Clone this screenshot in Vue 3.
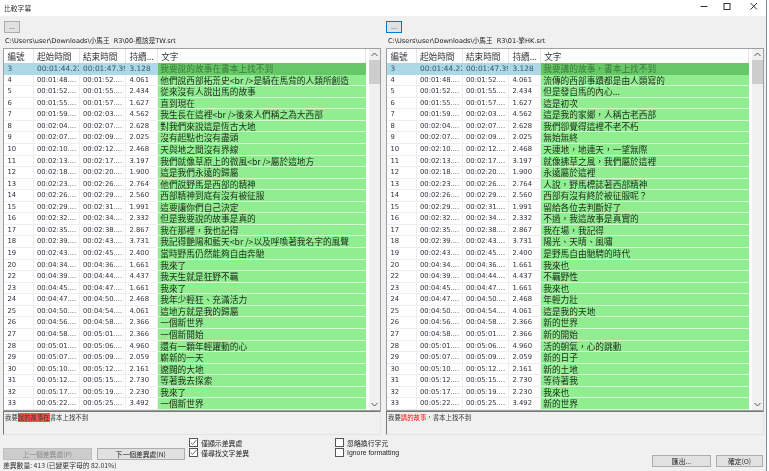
<template>
  <div class="window">
    <div class="titlebar">
      <span class="title">比較字幕</span>
      <div class="win-btns">
        <svg width="12" height="12" viewBox="0 0 12 12"><path d="M2.5 4.5h7" stroke="#333" fill="none" /></svg>
        <svg width="12" height="12" viewBox="0 0 12 12"><rect x="3" y="1.5" width="6" height="6" stroke="#333" fill="none" /></svg>
        <svg width="12" height="12" viewBox="0 0 12 12"><path d="M2.5 1l6.5 6.5M9 1L2.5 7.5" stroke="#333" fill="none" /></svg>
      </div>
    </div>

    <div class="panes">
      <div v-for="(pane, i) in panes" :key="i" class="pane">
        <button class="dots" :class="{ focused: i === 1 }">...</button>
        <div class="path">{{ pane.path }}</div>
        <div class="list">
          <div class="table">
            <div class="row head">
              <div class="c">編號</div>
              <div class="c">起始時間</div>
              <div class="c">結束時間</div>
              <div class="c">持續...</div>
              <div class="c">文字</div>
            </div>
            <div v-for="(r, n) in rows" :key="r[0]" class="row" :class="{ sel: n === 0 }">
              <div class="c">{{ r[0] }}</div>
              <div class="c">{{ r[1] }}</div>
              <div class="c">{{ r[2] }}</div>
              <div class="c">{{ r[3] }}</div>
              <div class="c txt">{{ pane.lines[n] }}</div>
            </div>
          </div>
          <div class="scroll">
            <svg class="arrow" width="7" height="5" viewBox="0 0 7 5"><path d="M.5 4l3-3 3 3" stroke="#555" fill="none" /></svg>
            <div class="thumb"></div>
            <svg class="arrow" width="7" height="5" viewBox="0 0 7 5"><path d="M.5 1l3 3 3-3" stroke="#555" fill="none" /></svg>
          </div>
        </div>
        <div class="diff-box">
          <span v-for="(s, k) in pane.diff" :key="k" :class="s.cls">{{ s.t }}</span>
        </div>
      </div>
    </div>

    <div class="footer">
      <div class="nav">
        <div class="nav-btns">
          <button class="btn wide" disabled>上一個差異處(P)</button>
          <button class="btn wide">下一個差異處(N)</button>
        </div>
        <div class="status">差異數量: 413 (已變更字母的 82.01%)</div>
      </div>
      <div class="checks">
        <label class="check"><span class="box">
          <svg width="7" height="7" viewBox="0 0 9 9"><path d="M1 4.5l2.5 2.5L8 1.5" stroke="#444" fill="none" /></svg>
        </span>僅顯示差異處</label>
        <label class="check"><span class="box">
          <svg width="7" height="7" viewBox="0 0 9 9"><path d="M1 4.5l2.5 2.5L8 1.5" stroke="#444" fill="none" /></svg>
        </span>僅尋找文字差異</label>
      </div>
      <div class="checks">
        <label class="check"><span class="box"></span>忽略換行字元</label>
        <label class="check latin"><span class="box"></span>Ignore formatting</label>
      </div>
      <div class="actions">
        <button class="btn export">匯出...</button>
        <button class="btn ok">確定(O)</button>
      </div>
    </div>
  </div>
</template>

<script setup>
const rows = [
  ['3', '00:01:44.22', '00:01:47.39', '3.128'],
  ['4', '00:01:48....', '00:01:52....', '4.061'],
  ['5', '00:01:52....', '00:01:55....', '2.434'],
  ['6', '00:01:55....', '00:01:57....', '1.627'],
  ['7', '00:01:59....', '00:02:03....', '4.562'],
  ['8', '00:02:04....', '00:02:07....', '2.628'],
  ['9', '00:02:07....', '00:02:09....', '2.025'],
  ['10', '00:02:10....', '00:02:12....', '2.468'],
  ['11', '00:02:13....', '00:02:17....', '3.197'],
  ['12', '00:02:18....', '00:02:20....', '1.900'],
  ['13', '00:02:23....', '00:02:26....', '2.764'],
  ['14', '00:02:26....', '00:02:29....', '2.560'],
  ['15', '00:02:29....', '00:02:31....', '1.991'],
  ['16', '00:02:32....', '00:02:34....', '2.332'],
  ['17', '00:02:35....', '00:02:38....', '2.867'],
  ['18', '00:02:39....', '00:02:43....', '3.731'],
  ['19', '00:02:43....', '00:02:45....', '2.400'],
  ['20', '00:04:34....', '00:04:36....', '1.661'],
  ['22', '00:04:39....', '00:04:44....', '4.437'],
  ['23', '00:04:45....', '00:04:47....', '1.661'],
  ['24', '00:04:47....', '00:04:50....', '2.468'],
  ['25', '00:04:50....', '00:04:54....', '4.061'],
  ['26', '00:04:56....', '00:04:58....', '2.366'],
  ['27', '00:04:58....', '00:05:01....', '2.366'],
  ['28', '00:05:01....', '00:05:06....', '4.960'],
  ['29', '00:05:07....', '00:05:09....', '2.059'],
  ['30', '00:05:10....', '00:05:12....', '2.161'],
  ['31', '00:05:12....', '00:05:15....', '2.730'],
  ['32', '00:05:17....', '00:05:19....', '2.230'],
  ['33', '00:05:22....', '00:05:25....', '3.492']
]

const panes = [
  {
    path: 'C:\\Users\\user\\Downloads\\小馬王  R3\\00-應該是TW.srt',
    lines: [
      '我要說的故事在書本上找不到',
      '他們說西部拓荒史<br />是騎在馬背的人類所創造',
      '從來沒有人說出馬的故事',
      '直到現在',
      '我生長在這裡<br />後來人們稱之為大西部',
      '對我們來說這是恆古大地',
      '沒有起點也沒有盡頭',
      '天與地之間沒有界線',
      '我們就像草原上的微風<br />屬於這地方',
      '這是我們永遠的歸屬',
      '他們說野馬是西部的精神',
      '西部精神到底有沒有被征服',
      '這要讓你們自己決定',
      '但是我要說的故事是真的',
      '我在那裡，我也記得',
      '我記得艷陽和藍天<br />以及呼喚著我名字的風聲',
      '當時野馬仍然能夠自由奔馳',
      '我來了',
      '我天生就是狂野不羈',
      '我來了',
      '我年少輕狂、充滿活力',
      '這地方就是我的歸屬',
      '一個新世界',
      '一個新開始',
      '還有一顆年輕躍動的心',
      '嶄新的一天',
      '遼闊的大地',
      '等著我去探索',
      '我來了',
      '一個新世界'
    ],
    diff: [
      { t: '我要', cls: '' },
      { t: '說的故事在', cls: 'bg-red' },
      { t: '書本上找不到', cls: '' }
    ]
  },
  {
    path: 'C:\\Users\\user\\Downloads\\小馬王  R3\\01-繁HK.srt',
    lines: [
      '我要講的故事，書本上找不到',
      '流傳的西部事蹟都是由人類寫的',
      '但是發自馬的內心...',
      '這是初次',
      '這是我的家鄉，人稱古老西部',
      '我們卻覺得這裡不老不朽',
      '無始無終',
      '天連地，地連天，一望無際',
      '就像拂草之風，我們屬於這裡',
      '永遠屬於這裡',
      '人說，野馬標誌著西部精神',
      '西部有沒有終於被征服呢？',
      '留給各位去判斷好了',
      '不過，我這故事是真實的',
      '我在場，我記得',
      '陽光、天晴、風嘯',
      '是野馬自由馳騁的時代',
      '我來也',
      '不羈野性',
      '我來也',
      '年輕力壯',
      '這是我的天地',
      '新的世界',
      '新的開始',
      '活的朝氣，心的跳動',
      '新的日子',
      '新的土地',
      '等待著我',
      '我來也',
      '新的世界'
    ],
    diff: [
      { t: '我要', cls: '' },
      { t: '講的故事，', cls: 'fg-red' },
      { t: '書本上找不到', cls: '' }
    ]
  }
]
</script>

<style>
html, body {
  margin: 0;
  background: #fff;
}
</style>

<style scoped>
.window {
  width: 766px;
  height: 471px;
  overflow: hidden;
  background: #f0f0f0;
  border-right: 1px solid #7f8c99;
  font-family: "Noto Sans CJK TC", "Noto Sans", sans-serif;
  font-size: 7px;
  color: #222;
  display: flex;
  flex-direction: column;
  filter: blur(0.3px);
}

.titlebar {
  height: 16px;
  background: #fff;
  display: flex;
  align-items: center;
  justify-content: space-between;
  padding: 0 6px 0 4px;
  flex: none;
}

.title {
  font-size: 6.8px;
  color: #333;
}

.win-btns {
  display: flex;
  gap: 11px;
}

.win-btns svg:last-child {
  margin-left: 4px;
}

.panes {
  display: grid;
  grid-template-columns: 378px 378px;
  gap: 5px;
  padding: 5px 0 0 3px;
  flex: none;
}

.dots {
  display: block;
  width: 16px;
  height: 12px;
  margin: 0 0 3px 1px;
  padding: 0 0 2px;
  border: 1px solid #adadad;
  background: #e1e1e1;
  font: 7px "Liberation Sans", sans-serif;
  color: #333;
}

.dots.focused {
  margin-left: 0;
  border-color: #0078d7;
}

.path {
  height: 10px;
  line-height: 10px;
  margin-left: 2px;
  font-family: "DejaVu Sans", "Noto Sans CJK TC", sans-serif;
  font-size: 6.6px;
  white-space: pre;
}

.list {
  display: flex;
  background: #fff;
  border: 1px solid #a0a0a0;
  margin-top: 2px;
}

.table {
  flex: 1;
  min-width: 0;
}

.row {
  display: grid;
  grid-template-columns: 29.5px 46px 46.5px 31.7px 1fr;
  height: 11.57px;
  font-family: "DejaVu Sans", "Noto Sans CJK TC", sans-serif;
  font-size: 6.8px;
  line-height: 11.5px;
  color: #33333e;
}

.row.head {
  height: 14px;
  font-family: "Noto Sans CJK TC", sans-serif;
  font-size: 8.6px;
  line-height: 14px;
  color: #333;
}

.c {
  padding-left: 3.5px;
  overflow: hidden;
  white-space: nowrap;
  box-sizing: border-box;
  border-right: 1px solid #eee;
  border-bottom: 1px solid #eee;
}

.row.head .c {
  border-bottom: none;
  border-right-color: #e4e4e4;
}

.txt {
  background: #90ee90;
  border-right: none;
  border-bottom: 1px solid #d2f7d2;
  padding-left: 2.5px;
  font-family: "Noto Sans CJK TC", sans-serif;
  font-size: 8.7px;
  line-height: 11px;
  color: #1d2a1d;
}

.row.sel {
  font-size: 7.4px;
}

.row.sel .c {
  background: #add8e6;
  border-color: #add8e6;
  color: #3a5560;
}

.row.sel .txt {
  background: #66c766;
  border-color: #66c766;
  color: #3c7a3c;
}

.scroll {
  width: 11.5px;
  flex: none;
  background: #f0f0f0;
  margin-left: 2.5px;
  display: flex;
  flex-direction: column;
  align-items: center;
}

.arrow {
  flex: none;
  margin: 3px 0;
}

.thumb {
  width: 100%;
  height: 24px;
  background: #cdcdcd;
  margin-bottom: auto;
}

.diff-box {
  height: 24px;
  box-sizing: border-box;
  border: 1px solid #e4e4e4;
  border-left-color: #777;
  border-top-color: #777;
  padding: 2px 0 0 1px;
  font-size: 6.4px;
  line-height: 8px;
  color: #333;
}

.bg-red {
  background: #ff5050;
}

.fg-red {
  color: #f00;
}

.footer {
  display: flex;
  padding: 4px 3px 0;
  flex: 1;
}

.nav {
  width: 186px;
  flex: none;
  padding-top: 9px;
}

.nav-btns {
  display: flex;
  gap: 5px;
}

.btn {
  height: 12px;
  padding: 0;
  border: 1px solid #adadad;
  background: #e1e1e1;
  font-family: "Noto Sans CJK TC", sans-serif;
  font-size: 6.8px;
  line-height: 10px;
  color: #222;
}

.btn:disabled {
  background: #ccc;
  border-color: #bfbfbf;
  color: #888;
}

.wide {
  width: 88.5px;
}

.status {
  margin-top: 0.5px;
  font-size: 6.8px;
  line-height: 10px;
  color: #333;
}

.checks {
  display: flex;
  flex-direction: column;
  gap: 2px;
  width: 146px;
  flex: none;
}

.check {
  display: flex;
  align-items: center;
  gap: 3px;
  height: 8px;
  font-size: 6.9px;
  white-space: nowrap;
}

.latin {
  font-family: "Liberation Sans", sans-serif;
}

.box {
  width: 7px;
  height: 7px;
  border: 1px solid #555;
  background: #fff;
  display: flex;
  flex: none;
}

.actions {
  margin-left: auto;
  display: flex;
  gap: 5px;
  padding-top: 16px;
}

.export {
  width: 59px;
}

.ok {
  width: 47px;
}
</style>
